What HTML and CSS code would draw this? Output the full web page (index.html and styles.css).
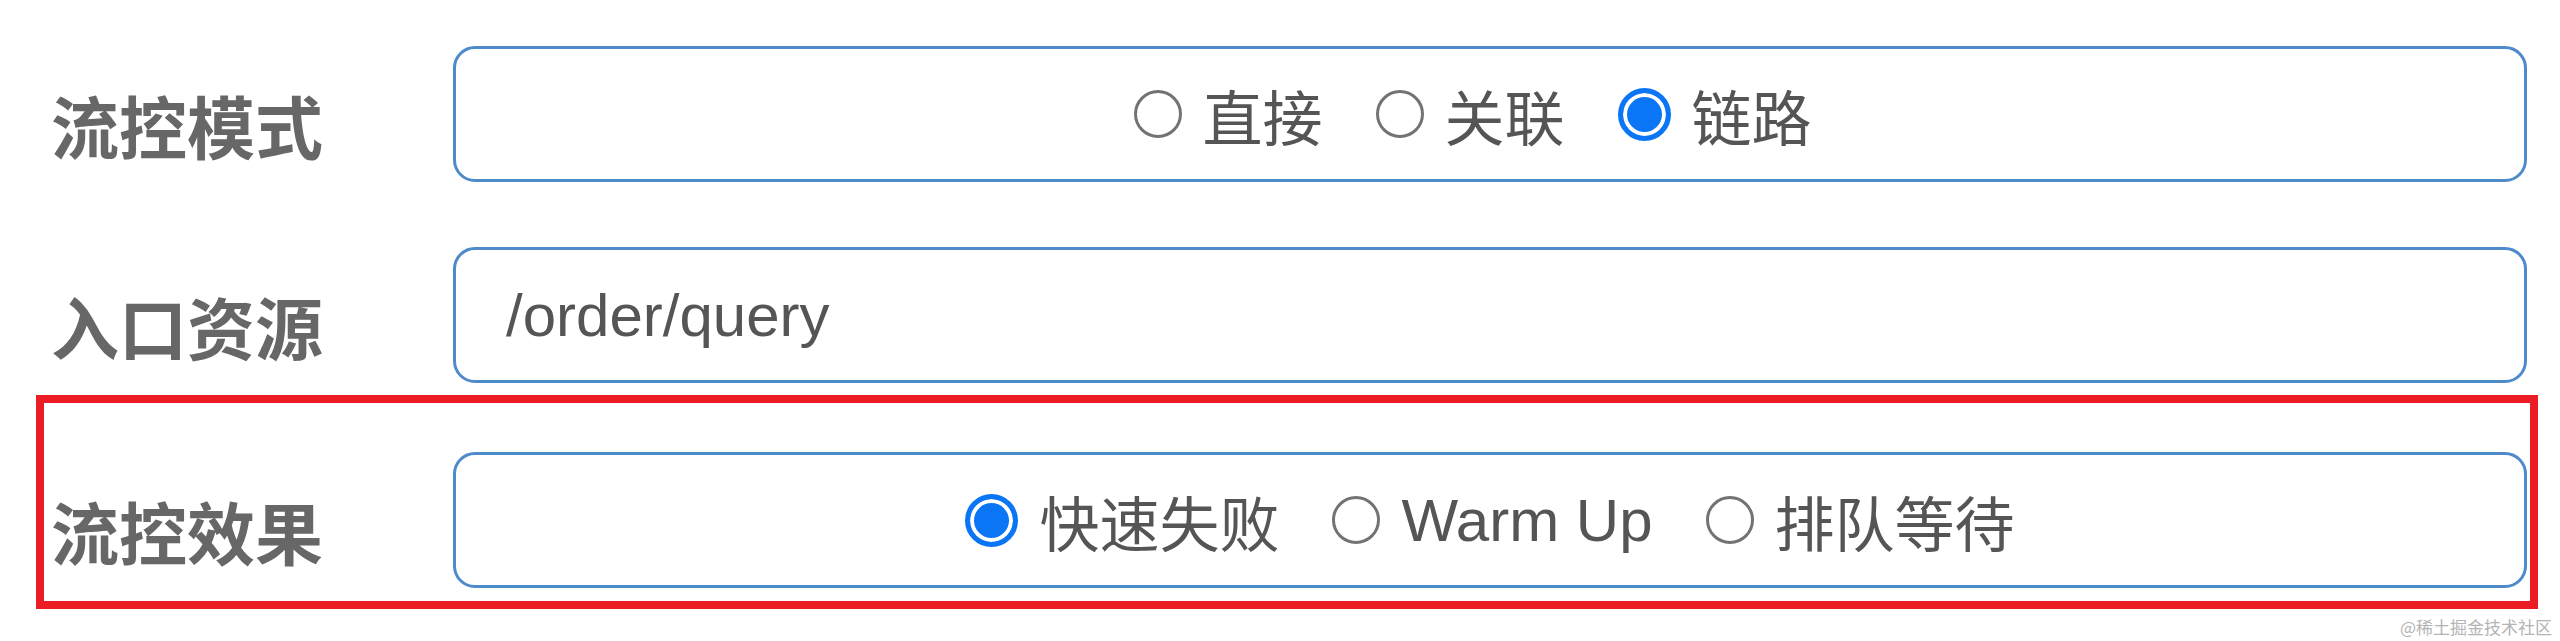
FILE: index.html
```html
<!DOCTYPE html>
<html lang="zh-CN">
<head>
  <meta charset="UTF-8">
  <title>流控规则</title>
  <link rel="stylesheet" href="styles.css">
</head>
<body>
  <div class="form">
    <div class="field">
      <label class="field-label">流控模式</label>
      <div class="field-box radios radios-mode">
        <label class="radio"><input type="radio" name="mode">直接</label>
        <label class="radio"><input type="radio" name="mode">关联</label>
        <label class="radio"><input type="radio" name="mode" checked>链路</label>
      </div>
    </div>

    <div class="field">
      <label class="field-label" for="resource">入口资源</label>
      <input class="field-box text-input" id="resource" type="text" value="/order/query">
    </div>

    <div class="field highlight">
      <label class="field-label">流控效果</label>
      <div class="field-box radios">
        <label class="radio"><input type="radio" name="effect" checked>快速失败</label>
        <label class="radio"><input type="radio" name="effect">Warm Up</label>
        <label class="radio"><input type="radio" name="effect">排队等待</label>
      </div>
    </div>
  </div>

  <div class="watermark">@稀土掘金技术社区</div>
</body>
</html>
```

FILE: styles.css
```css
html, body {
  margin: 0;
  background: #fff;
}

body {
  position: relative;
  height: 641px;
  overflow: hidden;
  font-family: "Liberation Sans", "Noto Sans CJK SC", sans-serif;
  color: #555;
}

.form {
  padding: 38px 22px 0 36px;
}

.field {
  display: flex;
  align-items: center;
  border: 8px solid transparent;
  padding: 0 3px 0 7px;
}

.field + .field {
  margin-top: 49px;
}

.field.highlight {
  margin-top: 4px;
  padding-top: 49px;
  padding-bottom: 13px;
  border-color: #ec1c24;
}

.field-label {
  flex: 0 0 402px;
  padding-top: 22px;
  font-family: "Noto Sans CJK SC", sans-serif;
  font-size: 68px;
  font-weight: 700;
  color: #676767;
  line-height: 1.2;
}

.field-box {
  flex: 1;
  height: 136px;
  box-sizing: border-box;
  border: 3px solid #4f8acb;
  border-radius: 22px;
  background: #fff;
}

.text-input {
  width: 100%;
  padding: 0 50px;
  font-family: "Liberation Sans", sans-serif;
  font-size: 60px;
  color: #555;
  outline: none;
}

.radios {
  display: flex;
  align-items: center;
  justify-content: center;
  gap: 53px;
}

.radios-mode {
  padding-right: 35px;
}

.radio {
  display: inline-flex;
  align-items: center;
  gap: 21px;
  font-size: 60px;
  color: #555;
  font-family: "Liberation Sans", "Noto Sans CJK SC", sans-serif;
}

.radio input {
  appearance: none;
  -webkit-appearance: none;
  margin: 0;
  width: 48px;
  height: 48px;
  box-sizing: border-box;
  border: 3px solid #737373;
  border-radius: 50%;
  background: #fff;
}

.radio input:checked {
  width: 53px;
  height: 53px;
  border: 5px solid #0b76f5;
  background: #0b76f5;
  box-shadow: inset 0 0 0 4px #fff;
}

.watermark {
  position: absolute;
  right: 8px;
  top: 614px;
  font-family: "Noto Sans CJK SC", sans-serif;
  font-size: 17px;
  color: #b4b4b4;
}
```
